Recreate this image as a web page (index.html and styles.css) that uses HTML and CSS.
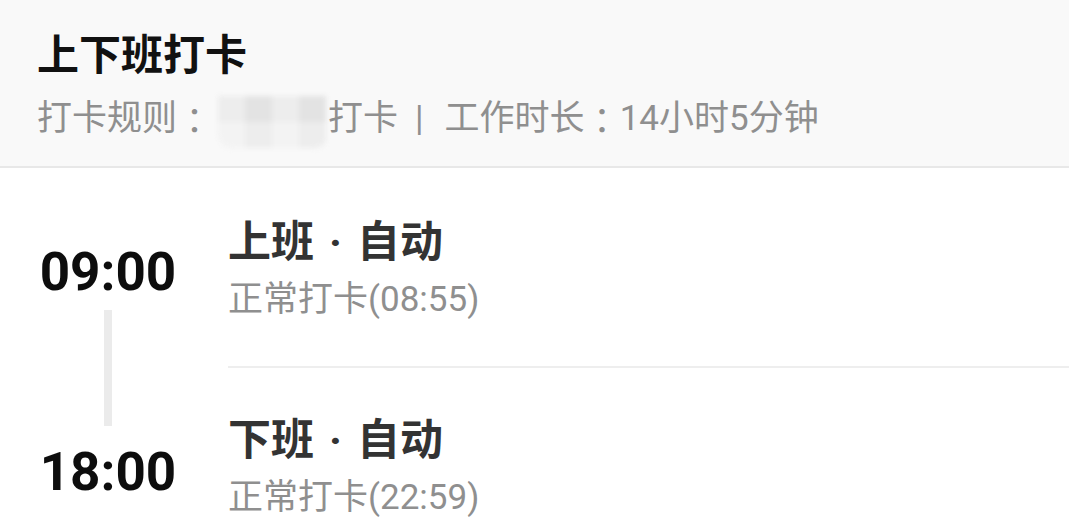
FILE: index.html
```html
<!DOCTYPE html>
<html lang="zh-CN">
<head>
<meta charset="utf-8">
<title>上下班打卡</title>
<link rel="stylesheet" href="styles.css">
</head>
<body>
<header class="head">
  <h1 class="head-title">上下班打卡</h1>
  <p class="head-sub">打卡规则<span class="colon">：</span><span class="mosaic"><i></i><i class="d"></i><i></i><i class="d"></i><i class="l"></i><i></i><i class="l"></i><i></i></span>打卡<span class="bar">|</span>工作时长<span class="colon">：</span>14小时5分钟</p>
</header>
<main class="list">
  <section class="entry entry-first">
    <div class="time-col">
      <div class="time">09:00</div>
      <div class="rail"></div>
    </div>
    <div class="content">
      <div class="entry-title">上班<span class="dot">·</span>自动</div>
      <div class="entry-sub">正常打卡(08:55)</div>
    </div>
  </section>
  <section class="entry entry-last">
    <div class="time-col">
      <div class="rail"></div>
      <div class="time">18:00</div>
    </div>
    <div class="content">
      <div class="entry-title">下班<span class="dot">·</span>自动</div>
      <div class="entry-sub">正常打卡(22:59)</div>
    </div>
  </section>
</main>
</body>
</html>
```
FILE: styles.css
```css
* { box-sizing: border-box; }
html, body { margin: 0; padding: 0; background: #ffffff; }
body {
  width: 1069px;
  height: 532px;
  overflow: hidden;
  font-family: Roboto, "Noto Sans CJK SC", sans-serif;
}
.head {
  background: #f9f9f9;
  border-bottom: 2px solid #e8e8e8;
  height: 168px;
  padding: 26px 0 0 37px;
}
.head-title {
  margin: 0;
  font-size: 42px;
  line-height: 52px;
  font-weight: 700;
  color: #111111;
  font-family: "Noto Sans CJK SC", sans-serif;
}
.head-sub {
  margin: 12px 0 0;
  font-size: 35px;
  line-height: 50px;
  color: #8f8f8f;
  display: flex;
  align-items: center;
  white-space: pre;
}
.colon { font-family: "Noto Sans CJK TC", sans-serif; }
.mosaic {
  display: inline-grid;
  grid-template-columns: repeat(4, 27px);
  grid-template-rows: 26px 26px;
  width: 110px;
  height: 52px;
  margin: 6px 0 0 6px;
  filter: blur(2.5px);
  border-radius: 0 0 14px 14px;
  overflow: hidden;
}
.mosaic i { background: #ededed; }
.mosaic i.d { background: #e3e3e3; }
.mosaic i.l { background: #f3f3f3; }
.bar { color: #8f8f8f; margin: 0 21px 0 17px; }
.list { display: flex; flex-direction: column; }
.entry {
  display: flex;
  height: 200px;
}
.entry-last { height: 164px; }
.time-col {
  width: 176px;
  padding-left: 40px;
  display: flex;
  flex-direction: column;
  align-items: center;
  flex: none;
}
.time {
  width: 138px;
  text-align: center;
  font-size: 53px;
  line-height: 56px;
  font-weight: 700;
  color: #0d0d0d;
}
.rail {
  width: 8px;
  background: #ebebeb;
}
.entry-first .time { margin-top: 76px; }
.entry-first .rail { margin-top: 10px; flex: 1; }
.entry-last .rail { height: 58px; flex: none; }
.entry-last .time { margin-top: 18px; }
.content {
  flex: 1;
  margin-left: 52px;
  padding-top: 48px;
}
.entry-first .content { border-bottom: 2px solid #eeeeee; }
.entry-last .content { padding-top: 46px; }
.entry-title {
  font-size: 43px;
  line-height: 52px;
  font-weight: 700;
  color: #333333;
  white-space: pre;
}
.dot { margin: 0 15px; }
.entry-sub {
  margin-top: 10px;
  font-size: 35px;
  line-height: 44px;
  color: #8f8f8f;
}
```
